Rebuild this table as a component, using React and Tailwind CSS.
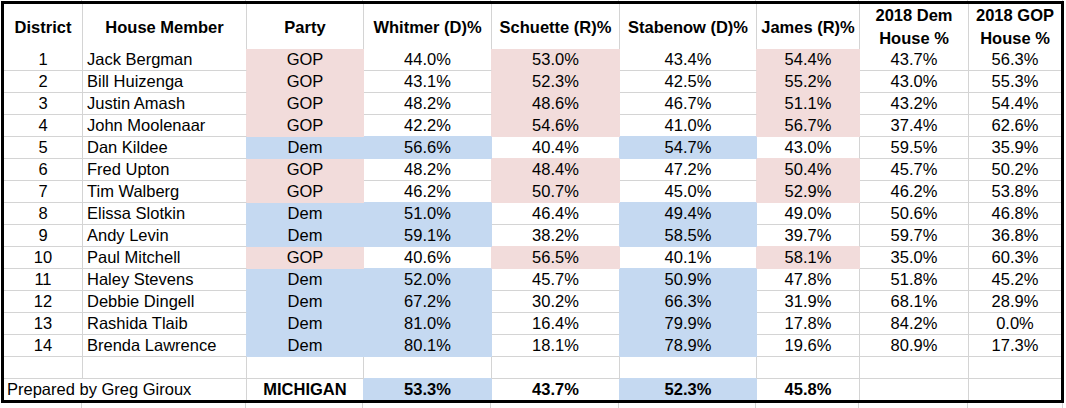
import React from 'react';

const rows = [
  [1, 'Jack Bergman', 'GOP', '44.0%', '53.0%', '43.4%', '54.4%', '43.7%', '56.3%'],
  [2, 'Bill Huizenga', 'GOP', '43.1%', '52.3%', '42.5%', '55.2%', '43.0%', '55.3%'],
  [3, 'Justin Amash', 'GOP', '48.2%', '48.6%', '46.7%', '51.1%', '43.2%', '54.4%'],
  [4, 'John Moolenaar', 'GOP', '42.2%', '54.6%', '41.0%', '56.7%', '37.4%', '62.6%'],
  [5, 'Dan Kildee', 'Dem', '56.6%', '40.4%', '54.7%', '43.0%', '59.5%', '35.9%'],
  [6, 'Fred Upton', 'GOP', '48.2%', '48.4%', '47.2%', '50.4%', '45.7%', '50.2%'],
  [7, 'Tim Walberg', 'GOP', '46.2%', '50.7%', '45.0%', '52.9%', '46.2%', '53.8%'],
  [8, 'Elissa Slotkin', 'Dem', '51.0%', '46.4%', '49.4%', '49.0%', '50.6%', '46.8%'],
  [9, 'Andy Levin', 'Dem', '59.1%', '38.2%', '58.5%', '39.7%', '59.7%', '36.8%'],
  [10, 'Paul Mitchell', 'GOP', '40.6%', '56.5%', '40.1%', '58.1%', '35.0%', '60.3%'],
  [11, 'Haley Stevens', 'Dem', '52.0%', '45.7%', '50.9%', '47.8%', '51.8%', '45.2%'],
  [12, 'Debbie Dingell', 'Dem', '67.2%', '30.2%', '66.3%', '31.9%', '68.1%', '28.9%'],
  [13, 'Rashida Tlaib', 'Dem', '81.0%', '16.4%', '79.9%', '17.8%', '84.2%', '0.0%'],
  [14, 'Brenda Lawrence', 'Dem', '80.1%', '18.1%', '78.9%', '19.6%', '80.9%', '17.3%'],
];

const BG = { w: 'bg-white', p: 'bg-[#f2dcdb]', b: 'bg-[#c5d9f1]' };
const BR = { w: 'border-r-[#d4d4d4]', p: 'border-r-[#f2dcdb]', b: 'border-r-[#c5d9f1]' };
const BB = { w: 'border-b-[#d4d4d4]', p: 'border-b-[#f2dcdb]', b: 'border-b-[#c5d9f1]' };

const pct = (s) => parseFloat(s);

// fill for each cell: header, 14 rows, blank row, total row
const fills = [
  Array(9).fill('w'),
  ...rows.map((r) => {
    const party = r[2] === 'GOP' ? 'p' : 'b';
    const gov = pct(r[3]) > pct(r[4]);
    const sen = pct(r[5]) > pct(r[6]);
    return ['w', 'w', party, gov ? 'b' : 'w', gov ? 'w' : 'p', sen ? 'b' : 'w', sen ? 'w' : 'p', 'w', 'w'];
  }),
  Array(9).fill('w'),
  ['w', 'w', 'w', 'b', 'w', 'b', 'w', 'w', 'w'],
];

const pick = (own, other) => (own !== 'w' ? own : other);

const cellCls = (r, c, last) => {
  const own = fills[r][c];
  const cls = [BG[own]];
  if (c < 8) cls.push('border-r', BR[pick(own, fills[r][c + 1])]);
  if (!last) cls.push('border-b', BB[pick(own, fills[r + 1][c])]);
  return cls.join(' ');
};

const headers = [
  'District',
  'House Member',
  'Party',
  'Whitmer (D)%',
  'Schuette (R)%',
  'Stabenow (D)%',
  'James (R)%',
  ['2018 Dem', 'House %'],
  ['2018 GOP', 'House %'],
];

const gridCols = 'grid grid-cols-[79px_164px_117px_128px_128px_137px_103px_109px_92px]';

const Strip = ({ h }) => (
  <div className={`flex ${h}`}>
    <div className="w-[82px] border-r border-r-[#d4d4d4]" />
    <div className="w-[164px] border-r border-r-[#d4d4d4]" />
    <div className="w-[117px] border-r border-r-[#d4d4d4]" />
    <div className="w-[128px] border-r border-r-[#d4d4d4]" />
    <div className="w-[128px] border-r border-r-[#d4d4d4]" />
    <div className="w-[137px] border-r border-r-[#d4d4d4]" />
    <div className="w-[103px] border-r border-r-[#d4d4d4]" />
    <div className="w-[109px] border-r border-r-[#d4d4d4]" />
    <div className="w-[95px] border-r border-r-[#d4d4d4]" />
  </div>
);

export default function App() {
  return (
    <div className="w-[1066px] h-[408px] bg-white overflow-hidden font-['Liberation_Sans',Arial,sans-serif] text-[16.5px] text-black">
      <Strip h="h-px" />
      <div className="flex">
        <div className="w-px" />
        <div className="w-[1063px] border-[3px] border-black">
          {/* Header */}
          <div className={`${gridCols} h-[45px] font-bold`}>
            {headers.map((h, c) => (
              <div key={c} className={`flex flex-col items-center justify-center text-center leading-[23px] ${cellCls(0, c)}`}>
                {Array.isArray(h) ? (
                  <>
                    <span>{h[0]}</span>
                    <span>{h[1]}</span>
                  </>
                ) : (
                  <span>{h}</span>
                )}
              </div>
            ))}
          </div>

          {/* Data rows */}
          {rows.map((r, i) => (
            <div key={r[0]} className={`${gridCols} h-[22px] leading-[21px]`}>
              {r.map((v, c) => (
                <div
                  key={c}
                  className={`${c === 1 ? 'text-left pl-[4px]' : 'text-center'} whitespace-nowrap ${cellCls(i + 1, c)}`}
                >
                  {v}
                </div>
              ))}
            </div>
          ))}

          {/* Blank row */}
          <div className={`${gridCols} h-[22px]`}>
            {Array.from({ length: 9 }).map((_, c) => (
              <div key={c} className={cellCls(15, c)} />
            ))}
          </div>

          {/* Totals */}
          <div className={`${gridCols} h-[21px] leading-[21px]`}>
            <div className={`col-span-2 pl-[3px] whitespace-nowrap ${cellCls(16, 1, true)}`}>Prepared by Greg Giroux</div>
            <div className={`text-center font-bold ${cellCls(16, 2, true)}`}>MICHIGAN</div>
            <div className={`text-center font-bold ${cellCls(16, 3, true)}`}>53.3%</div>
            <div className={`text-center font-bold ${cellCls(16, 4, true)}`}>43.7%</div>
            <div className={`text-center font-bold ${cellCls(16, 5, true)}`}>52.3%</div>
            <div className={`text-center font-bold ${cellCls(16, 6, true)}`}>45.8%</div>
            <div className={cellCls(16, 7, true)} />
            <div className={cellCls(16, 8, true)} />
          </div>
        </div>
      </div>
      <Strip h="h-[5px]" />
    </div>
  );
}
